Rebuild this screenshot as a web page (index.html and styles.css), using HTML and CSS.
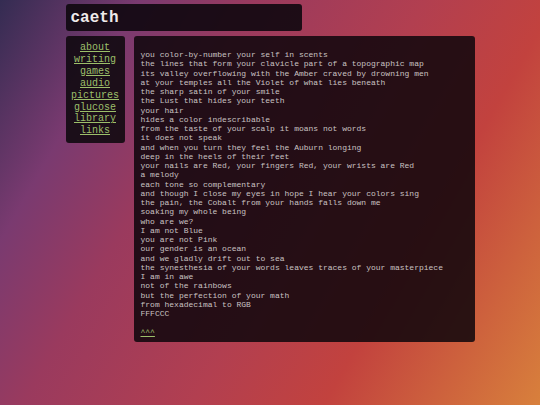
FILE: index.html
```html
<!DOCTYPE html>
<html>
<head>
<meta charset="utf-8">
<link rel="stylesheet" href="styles.css">
</head>
<body>
<div class="page">
  <header class="title">caeth</header>
  <div class="row">
    <nav class="nav">
      <a href="#">about</a>
      <a href="#">writing</a>
      <a href="#">games</a>
      <a href="#">audio</a>
      <a href="#">pictures</a>
      <a href="#">glucose</a>
      <a href="#">library</a>
      <a href="#">links</a>
    </nav>
    <main class="main">
<pre class="poem">you color-by-number your self in scents
the lines that form your clavicle part of a topographic map
its valley overflowing with the Amber craved by drowning men
at your temples all the Violet of what lies beneath
the sharp satin of your smile
the Lust that hides your teeth
your hair
hides a color indescribable
from the taste of your scalp it moans not words
it does not speak
and when you turn they feel the Auburn longing
deep in the heels of their feet
your nails are Red, your fingers Red, your wrists are Red
a melody
each tone so complementary
and though I close my eyes in hope I hear your colors sing
the pain, the Cobalt from your hands falls down me
soaking my whole being
who are we?
I am not Blue
you are not Pink
our gender is an ocean
and we gladly drift out to sea
the synesthesia of your words leaves traces of your masterpiece
I am in awe
not of the rainbows
but the perfection of your math
from hexadecimal to RGB
FFFCCC

<a href="#" class="top">^^^</a></pre>
    </main>
  </div>
</div>
</body>
</html>
```

FILE: styles.css
```css
html, body {
  margin: 0;
  padding: 0;
}
body {
  width: 540px;
  height: 405px;
  overflow: hidden;
  background: linear-gradient(120deg, #342c52 0%, #7a3a70 18%, #9a3a5e 33%, #b23f50 55%, #c2423e 72%, #d8803c 100%);
  font-family: "Nimbus Mono PS", "Courier", "FreeMono", "Liberation Mono", monospace;
  color: #c9c2c2;
}
.page {
  width: 409px;
  margin: 0 auto;
  padding-top: 4px;
  display: flex;
  flex-direction: column;
  gap: 5px;
}
.title {
  width: 236px;
  height: 27px;
  box-sizing: border-box;
  padding: 0 5px;
  display: flex;
  align-items: center;
  background: rgba(14, 8, 14, 0.9);
  border-radius: 3px;
  font-size: 16px;
  font-weight: bold;
  color: #eeeaea;
}
.row {
  display: flex;
  align-items: flex-start;
  gap: 9px;
}
.nav {
  width: 59px;
  box-sizing: border-box;
  padding: 6px 0 6px;
  display: flex;
  flex-direction: column;
  align-items: center;
  background: rgba(14, 8, 14, 0.88);
  border-radius: 3px;
}
.nav a {
  font-size: 10px;
  line-height: 11.9px;
  color: #9cbf6a;
  text-decoration: underline;
}
.main {
  width: 341px;
  box-sizing: border-box;
  padding: 14px 7px 5px;
  background: rgba(14, 6, 12, 0.86);
  border-radius: 3px;
}
.poem {
  margin: 0;
  font-family: "Nimbus Mono PS", "Courier", "FreeMono", "Liberation Mono", monospace;
  font-size: 8px;
  line-height: 9.25px;
  color: #c9c2c2;
  white-space: pre;
}
.top {
  color: #9cbf6a;
  text-decoration: underline;
}
```
